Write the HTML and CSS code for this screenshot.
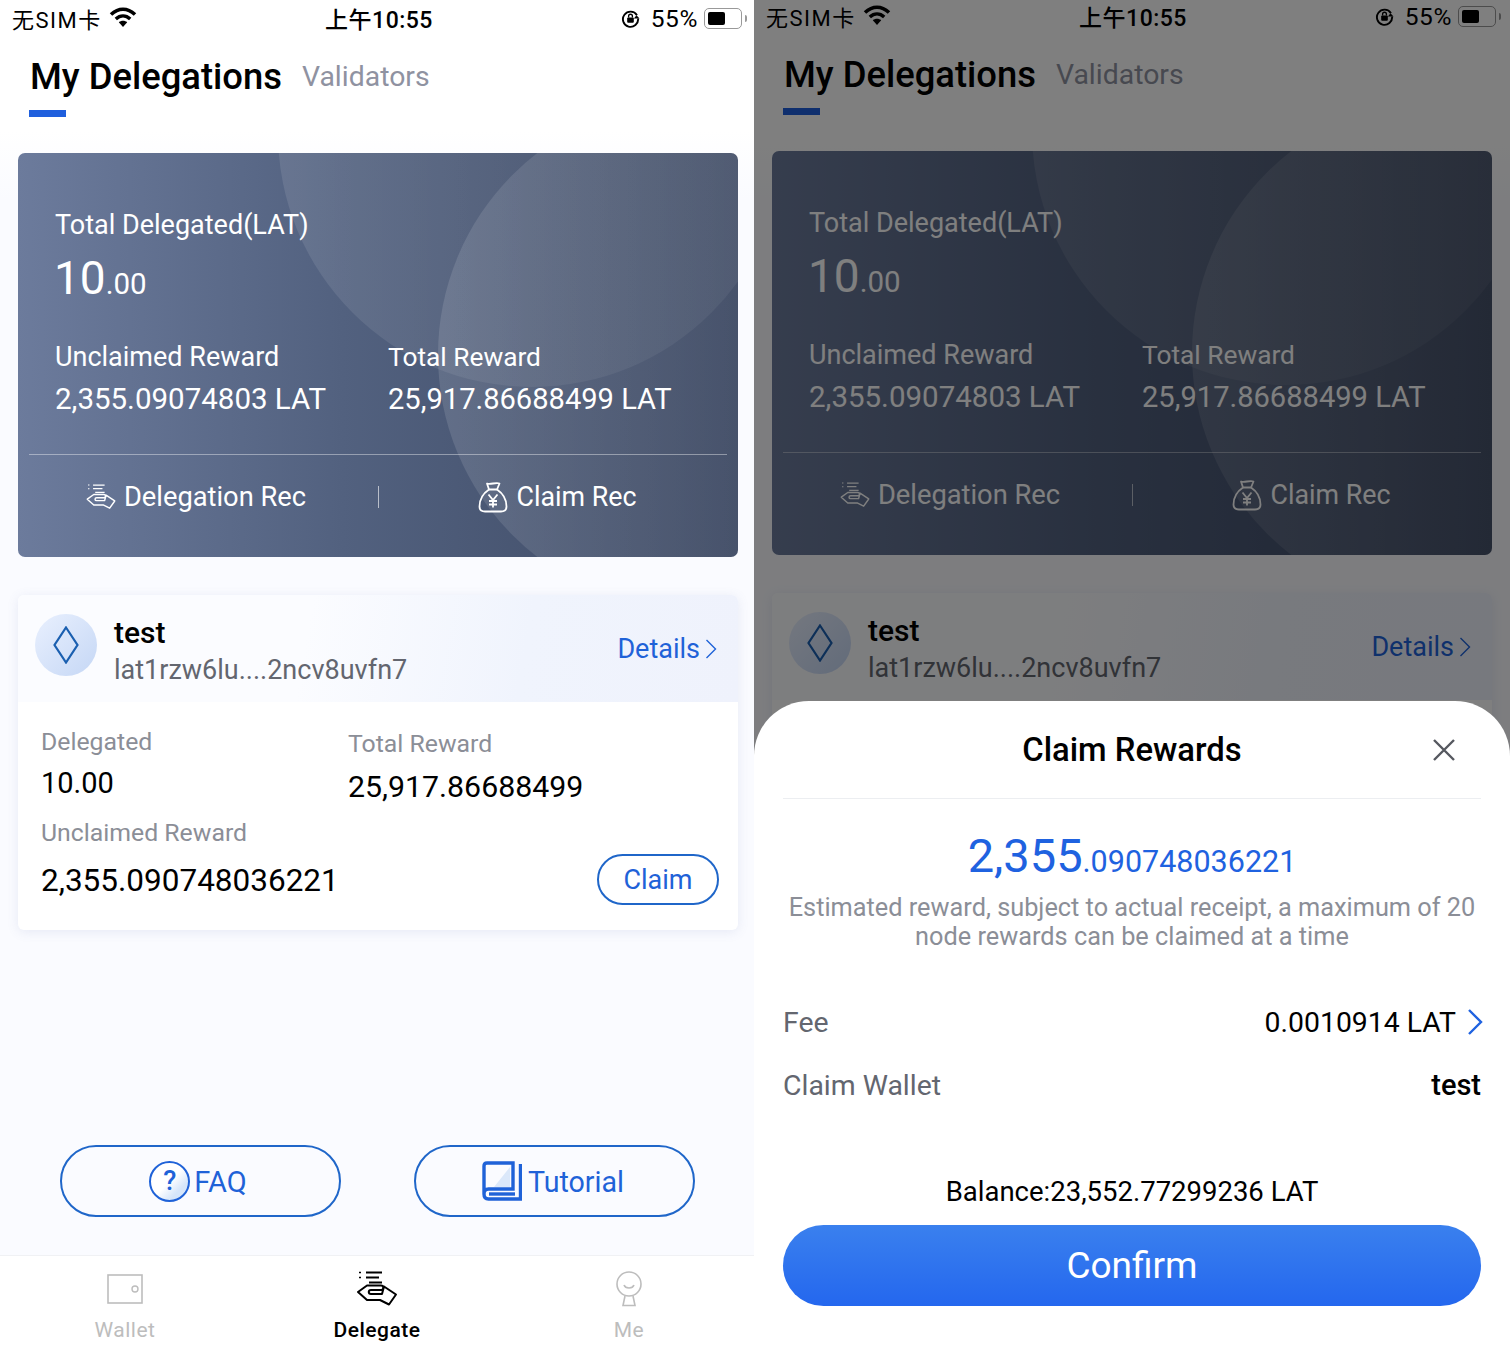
FILE: index.html
```html
<!DOCTYPE html>
<html lang="en">
<head>
<meta charset="UTF-8">
<title>My Delegations</title>
<meta name="viewport" content="width=device-width,initial-scale=1" />
<link rel="stylesheet" href="styles.css">
</head>
<body>

<svg class="defs" width="0" height="0">
  <symbol id="i-wifi" viewBox="0 0 28 20">
    <path d="M2 7.5C9.500 .5 18.500 .5 26 7.500" fill="none" stroke="currentColor" stroke-width="3.600"/>
    <path d="M6.800 12C11.200 8 16.800 8 21.200 12" fill="none" stroke="currentColor" stroke-width="3.400"/>
    <path d="M14 20L9.800 15.200C12.200 13.200 15.800 13.200 18.200 15.200Z" fill="currentColor"/>
  </symbol>
  <symbol id="i-lock" viewBox="0 0 20 20">
    <path d="M16.800 6.500A8 8 0 1 0 18 10" fill="none" stroke="currentColor" stroke-width="2"/>
    <path d="M19.500 10l-3.200-3.500-2.800 3.500z" fill="currentColor"/>
    <rect x="6.500" y="9" width="7" height="5.500" rx="1" fill="currentColor"/>
    <path d="M8 9V7.500a2 2 0 0 1 4 0V9" fill="none" stroke="currentColor" stroke-width="1.400"/>
  </symbol>
  <symbol id="i-hand" viewBox="0 0 42 36">
    <path d="M10 1.500H26M10 6.500H23M13 11.500H26" fill="none" stroke="currentColor" stroke-width="1.800"/>
    <path d="M3 1.500H5M3 6.500H5" fill="none" stroke="currentColor" stroke-width="1.400"/>
    <path d="M2 21L11 14.500H25C28 14.500 28 19 25 19H15C12 19 12 23 15 23H26L28 15.500L40 23.500L33 33.500L24 29H11Z" fill="none" stroke="currentColor" stroke-width="2" stroke-linejoin="round"/>
  </symbol>
  <symbol id="i-bag" viewBox="0 0 30 32">
    <path d="M9 2.500C12 4 18 1 21.500 2.500L19 8.500H11Z" fill="none" stroke="currentColor" stroke-width="1.800" stroke-linejoin="round"/>
    <path d="M11 8.500C5 12.500 1.500 19 1.500 25.500C1.500 29 3.500 30.500 7 30.500H23C26.500 30.500 28.500 29 28.500 25.500C28.500 19 25 12.500 19 8.500" fill="none" stroke="currentColor" stroke-width="1.800"/>
    <path d="M10.500 13.500L15 19L19.500 13.500M15 19V26.500M11 20H19M11 23.500H19" fill="none" stroke="currentColor" stroke-width="1.800"/>
  </symbol>
  <symbol id="i-book" viewBox="0 0 40 40">
    <path d="M12 26L28 6V26Z" fill="#dbe8fa"/>
    <path d="M2 33V5C2 3 3.500 2 5 2H31V28H6.500C3.500 28 2 30 2 33C2 36 3.500 38 6.500 38H38.500V3" fill="none" stroke="currentColor" stroke-width="3.400"/>
    <path d="M7 33H33" fill="none" stroke="currentColor" stroke-width="3.400"/>
  </symbol>
  <symbol id="i-wallet" viewBox="0 0 36 30">
    <rect x="1" y="1" width="34" height="28" fill="none" stroke="currentColor" stroke-width="1.600"/>
    <circle cx="28" cy="15" r="3" fill="none" stroke="currentColor" stroke-width="1.400"/>
  </symbol>
  <symbol id="i-user" viewBox="0 0 28 36">
    <circle cx="14" cy="13" r="12" fill="none" stroke="currentColor" stroke-width="1.600"/>
    <path d="M9 14C10.500 18 17.500 18 19 14" fill="none" stroke="currentColor" stroke-width="1.600"/>
    <path d="M10 25L8 34.500H20L18 25" fill="none" stroke="currentColor" stroke-width="1.600"/>
  </symbol>
</svg>

<div class="screens">

  <!-- left screen -->
  <div class="phone">
    <div class="status">
      <div class="status-left"><span>无SIM卡</span><svg class="wifi"><use href="#i-wifi"/></svg></div>
      <div class="status-time">上午10:55</div>
      <div class="status-right">
        <svg class="lock"><use href="#i-lock"/></svg><span>55%</span>
        <span class="battery"><span class="battery-fill"></span></span><span class="battery-tip"></span>
      </div>
    </div>
    <div class="tabs">
      <div class="tab-main">My Delegations<span class="tab-bar"></span></div>
      <div class="tab-other">Validators</div>
    </div>
    <div class="summary">
      <span class="blob blob-a"></span>
      <span class="blob blob-b"></span>
      <div class="summary-in">
        <div class="sum-label">Total Delegated(LAT)</div>
        <div class="sum-total">10<small>.00</small></div>
        <div class="sum-cols">
          <div>
            <div class="sum-sub">Unclaimed Reward</div>
            <div class="sum-val">2,355.09074803 LAT</div>
          </div>
          <div class="sum-col2">
            <div class="sum-sub">Total Reward</div>
            <div class="sum-val">25,917.86688499 LAT</div>
          </div>
        </div>
      </div>
      <div class="sum-links">
        <div class="sum-link"><svg class="ic-hand"><use href="#i-hand"/></svg>Delegation Rec</div>
        <div class="sum-link"><svg class="ic-bag"><use href="#i-bag"/></svg>Claim Rec</div>
      </div>
    </div>
    <div class="node">
      <div class="node-head">
        <div class="node-logo">
          <svg width="26" height="38" viewBox="0 0 26 38"><path d="M13 1.500L24.500 19L13 36.500L1.500 19Z" fill="none" stroke="#1a5fb0" stroke-width="2.200"/></svg>
        </div>
        <div class="node-name">
          <div class="node-title">test</div>
          <div class="node-addr">lat1rzw6lu....2ncv8uvfn7</div>
        </div>
        <div class="node-more">Details<svg width="12" height="20" viewBox="0 0 12 20"><path d="M1.500 1L10.500 10L1.500 19" fill="none" stroke="currentColor" stroke-width="1.400"/></svg></div>
      </div>
      <div class="node-body">
        <div class="node-cols">
          <div>
            <div class="node-label">Delegated</div>
            <div class="node-val">10.00</div>
          </div>
          <div class="node-col2">
            <div class="node-label">Total Reward</div>
            <div class="node-val node-val2">25,917.86688499</div>
          </div>
        </div>
        <div class="node-claim">
          <div>
            <div class="node-label">Unclaimed Reward</div>
            <div class="node-big">2,355.090748036221</div>
          </div>
          <div class="claim-btn">Claim</div>
        </div>
      </div>
    </div>
    <div class="actions">
      <div class="action">
        <span class="faq-ic">?</span>FAQ
      </div>
      <div class="action action-book">
        <svg class="ic-book"><use href="#i-book"/></svg>Tutorial
      </div>
    </div>
    <div class="tabbar">
      <div class="tabbar-item"><svg class="ic-wallet"><use href="#i-wallet"/></svg><span>Wallet</span></div>
      <div class="tabbar-item on"><svg class="ic-deleg"><use href="#i-hand"/></svg><span>Delegate</span></div>
      <div class="tabbar-item"><svg class="ic-user"><use href="#i-user"/></svg><span>Me</span></div>
    </div>
  </div>

  <!-- right screen, same page with the claim sheet open -->
  <div class="phone phone-right">
    <div class="status">
      <div class="status-left"><span>无SIM卡</span><svg class="wifi"><use href="#i-wifi"/></svg></div>
      <div class="status-time">上午10:55</div>
      <div class="status-right">
        <svg class="lock"><use href="#i-lock"/></svg><span>55%</span>
        <span class="battery"><span class="battery-fill"></span></span><span class="battery-tip"></span>
      </div>
    </div>
    <div class="tabs">
      <div class="tab-main">My Delegations<span class="tab-bar"></span></div>
      <div class="tab-other">Validators</div>
    </div>
    <div class="summary">
      <span class="blob blob-a"></span>
      <span class="blob blob-b"></span>
      <div class="summary-in">
        <div class="sum-label">Total Delegated(LAT)</div>
        <div class="sum-total">10<small>.00</small></div>
        <div class="sum-cols">
          <div>
            <div class="sum-sub">Unclaimed Reward</div>
            <div class="sum-val">2,355.09074803 LAT</div>
          </div>
          <div class="sum-col2">
            <div class="sum-sub">Total Reward</div>
            <div class="sum-val">25,917.86688499 LAT</div>
          </div>
        </div>
      </div>
      <div class="sum-links">
        <div class="sum-link"><svg class="ic-hand"><use href="#i-hand"/></svg>Delegation Rec</div>
        <div class="sum-link"><svg class="ic-bag"><use href="#i-bag"/></svg>Claim Rec</div>
      </div>
    </div>
    <div class="node">
      <div class="node-head">
        <div class="node-logo">
          <svg width="26" height="38" viewBox="0 0 26 38"><path d="M13 1.500L24.500 19L13 36.500L1.500 19Z" fill="none" stroke="#1a5fb0" stroke-width="2.200"/></svg>
        </div>
        <div class="node-name">
          <div class="node-title">test</div>
          <div class="node-addr">lat1rzw6lu....2ncv8uvfn7</div>
        </div>
        <div class="node-more">Details<svg width="12" height="20" viewBox="0 0 12 20"><path d="M1.500 1L10.500 10L1.500 19" fill="none" stroke="currentColor" stroke-width="1.400"/></svg></div>
      </div>
    </div>

    <div class="dim"></div>

    <div class="sheet">
      <div class="sheet-head">
        <div class="sheet-title">Claim Rewards</div>
        <svg class="sheet-close" width="24" height="24" viewBox="0 0 24 24"><path d="M2 2L22 22M22 2L2 22" fill="none" stroke="#55585f" stroke-width="2.400"/></svg>
      </div>
      <div class="sheet-amount">2,355<small>.090748036221</small></div>
      <div class="sheet-hint">Estimated reward, subject to actual receipt, a maximum of 20<br>node rewards can be claimed at a time</div>
      <div class="sheet-row sheet-fee">
        <span class="sheet-key">Fee</span>
        <span class="sheet-v">0.0010914 LAT<svg width="16" height="28" viewBox="0 0 16 28"><path d="M2 2L14 14L2 26" fill="none" stroke="#1f62e0" stroke-width="2.400"/></svg></span>
      </div>
      <div class="sheet-row sheet-wallet">
        <span class="sheet-key">Claim Wallet</span>
        <span class="sheet-v sheet-strong">test</span>
      </div>
      <div class="sheet-balance">Balance:23,552.77299236 LAT</div>
      <div class="sheet-confirm">Confirm</div>
    </div>
  </div>

</div>
</body>
</html>
```

FILE: styles.css
```css
* {
  box-sizing: border-box;
}
body {
  margin: 0;
  background: #fff;
  font-family: Roboto, "Noto Sans CJK SC", sans-serif;
  color: #000;
}
.defs {
  position: absolute;
}
.screens {
  display: flex;
  width: 1510px;
  height: 1356px;
  overflow: hidden;
}

.phone {
  position: relative;
  flex: none;
  width: 756px;
  height: 1356px;
  overflow: hidden;
  background: linear-gradient(#fff 0, #fff 130px, #fafbff 200px);
}
.phone-right {
  margin-left: -2px;
}
.phone-right .status {
  margin-top: -2px;
}

/* status bar */
.status {
  display: grid;
  grid-template-columns: 1fr auto 1fr;
  align-items: center;
  height: 36px;
  padding: 0 9px 0 12px;
  font-size: 22px;
}
.status-left {
  display: flex;
  align-items: center;
  gap: 7px;
  letter-spacing: 1.500px;
}
.wifi {
  width: 28px;
  height: 20px;
  margin-top: -2px;
}
.status-time {
  margin-left: -1px;
  font-size: 23px;
  font-weight: 500;
  letter-spacing: .5px;
}
.status-right {
  display: flex;
  align-items: center;
  justify-content: flex-end;
  font-size: 24.500px;
  letter-spacing: .6px;
}
.lock {
  width: 19px;
  height: 19px;
  margin-right: 11px;
}
.battery {
  width: 38px;
  height: 21px;
  margin-left: 6px;
  padding: 3px;
  border: 1.500px solid #999;
  border-radius: 5px;
}
.battery-fill {
  display: block;
  width: 17px;
  height: 100%;
  background: #000;
  border-radius: 2px;
}
.battery-tip {
  width: 2px;
  height: 7px;
  margin-left: 3px;
  background: #999;
  border-radius: 0 2px 2px 0;
}

/* tabs */
.tabs {
  display: flex;
  gap: 20px;
  padding: 21px 0 0 30px;
}
.tab-main {
  font-size: 36.400px;
  font-weight: 500;
  line-height: 40px;
}
.tab-bar {
  display: block;
  width: 37px;
  height: 7px;
  margin: 13px 0 0 -1px;
  background: #1f5fdd;
}
.tab-other {
  font-size: 28.400px;
  line-height: 40px;
  color: #8f92a1;
}

/* summary card */
.summary {
  position: relative;
  height: 404px;
  margin: 36px 18px 0;
  overflow: hidden;
  border-radius: 7px;
  color: #fff;
  background: linear-gradient(90deg, #6c7b9c 0, #52617f 45%, #3d4963 100%);
}
.blob {
  position: absolute;
  border-radius: 50%;
}
.blob-a {
  left: 260px;
  top: -274px;
  width: 508px;
  height: 508px;
  background: linear-gradient(90deg, rgba(255,255,255,.1) 0, rgba(255,255,255,.06) 50%, rgba(255,255,255,.05) 100%);
}
.blob-b {
  left: 420px;
  top: -53px;
  width: 510px;
  height: 510px;
  background: linear-gradient(90deg, rgba(255,255,255,.12) 0, rgba(255,255,255,.05) 60%);
}
.summary-in {
  position: relative;
  height: 302px;
  margin: 0 11px;
  padding: 55px 37px 0 26px;
  border-bottom: 1px solid rgba(255,255,255,.4);
}
.sum-label {
  font-size: 27px;
  line-height: 34px;
}
.sum-total {
  margin-top: 11px;
  font-size: 46px;
  line-height: 50px;
  margin-left: -1px;
}
.sum-total small {
  font-size: 29.500px;
}
.sum-cols {
  display: grid;
  grid-template-columns: 333px 1fr;
  margin-top: 32px;
}
.sum-sub {
  font-size: 27px;
  line-height: 32px;
}
.sum-val {
  margin-top: 8px;
  font-size: 29.500px;
  line-height: 36px;
}
.sum-col2 .sum-sub {
  font-size: 26.300px;
}
.sum-col2 .sum-val {
  font-size: 29.100px;
}
.sum-links {
  position: relative;
  display: grid;
  grid-template-columns: 1fr 1fr;
  padding-top: 31px;
}
.sum-link {
  display: flex;
  align-items: center;
  justify-content: center;
  height: 22px;
  font-size: 27.300px;
  padding-right: 3px;
}
.sum-link + .sum-link {
  font-size: 26.800px;
  border-left: 1px solid rgba(255,255,255,.6);
}
.ic-hand {
  width: 32px;
  height: 26px;
  margin: 0 7px 0 -2px;
}
.ic-bag {
  width: 30px;
  height: 32px;
  margin-right: 9px;
}

/* node card */
.node {
  height: 335px;
  margin: 38px 18px 0;
  background: #fff;
  border-radius: 6px;
  box-shadow: 0 2px 12px rgba(90,110,170,.12);
}
.node-head {
  display: flex;
  align-items: center;
  height: 107px;
  padding: 0 21px 0 17px;
  border-radius: 6px 6px 0 0;
  background: linear-gradient(100deg, #fbfcff 40%, #f0f4fd 70%, #eff2fc 100%);
}
.node-logo {
  display: flex;
  align-items: center;
  justify-content: center;
  width: 62px;
  height: 62px;
  margin-top: -8px;
  border-radius: 50%;
  background: linear-gradient(135deg, #e9f0fe, #c5d7f5);
}
.node-name {
  margin-left: 17px;
  margin-top: 5px;
}
.node-title {
  font-size: 30px;
  font-weight: 500;
  line-height: 34px;
}
.node-addr {
  margin-top: 3px;
  font-size: 27px;
  line-height: 34px;
  color: #63666f;
}
.node-more {
  display: flex;
  align-items: center;
  gap: 5px;
  margin-left: auto;
  font-size: 27px;
  color: #1f62d8;
}
.node-body {
  height: 228px;
  padding: 25px 19px 0 23px;
}
.node-cols {
  display: grid;
  grid-template-columns: 307px 1fr;
}
.node-col2 {
  padding-top: 2px;
}
.node-label {
  font-size: 24.800px;
  line-height: 30px;
  color: #8b8e97;
}
.node-val {
  margin-top: 8px;
  font-size: 29px;
  line-height: 36px;
}
.node-val2 {
  margin-top: 10px;
  font-size: 30.300px;
}
.node-claim {
  display: flex;
  justify-content: space-between;
  margin-top: 13px;
}
.node-big {
  margin-top: 14px;
  font-size: 31.500px;
  line-height: 38px;
}
.claim-btn {
  display: flex;
  align-items: center;
  justify-content: center;
  align-self: flex-end;
  width: 122px;
  height: 51px;
  margin-bottom: -5px;
  border: 2px solid #1f66c9;
  border-radius: 26px;
  font-size: 27px;
  color: #1f62d8;
}

/* bottom buttons */
.actions {
  display: flex;
  gap: 73px;
  margin-top: 215px;
  padding-left: 60px;
}
.action {
  display: flex;
  align-items: center;
  justify-content: center;
  width: 281px;
  height: 72px;
  padding: 2px 4px 0 0;
  border: 2px solid #1f66c9;
  border-radius: 36px;
  font-size: 29px;
  color: #1f62d8;
}
.action-book {
  font-size: 28.600px;
}
.faq-ic {
  display: flex;
  align-items: center;
  justify-content: center;
  width: 41px;
  height: 41px;
  margin: -2px 4px 0 -1px;
  border: 2px solid #1f62d8;
  border-radius: 50%;
  font-size: 27px;
  font-weight: 500;
  background: linear-gradient(135deg, #fff 50%, #d6e6fa 75%);
}
.ic-book {
  width: 40px;
  height: 40px;
  margin: -2px 6px 0 1px;
}

/* tab bar */
.tabbar {
  display: grid;
  grid-template-columns: repeat(3, 252px);
  height: 101px;
  margin-top: 38px;
  padding-top: 15px;
  background: #fff;
  border-top: 1px solid #f0f1f4;
}
.tabbar-item {
  display: flex;
  flex-direction: column;
  align-items: center;
  color: #bdbdbd;
  font-size: 21px;
  margin-left: -2px;
}
.tabbar-item svg {
  height: 36px;
}
.tabbar-item span {
  margin-top: 9px;
  line-height: 28px;
  letter-spacing: .5px;
}
.tabbar-item.on {
  color: #000;
  font-weight: 500;
}
.ic-wallet {
  width: 36px;
}
.ic-deleg {
  width: 42px;
}
.ic-user {
  width: 28px;
}

/* sheet on right */
.dim {
  position: absolute;
  inset: 0;
  background: rgba(0,0,0,.5);
}
.sheet {
  position: absolute;
  left: 0;
  right: 0;
  top: 701px;
  bottom: 0;
  padding: 0 29px;
  background: #fff;
  border-radius: 55px 55px 0 0;
}
.sheet-head {
  position: relative;
  height: 98px;
  padding-top: 29px;
  border-bottom: 1px solid #eceef1;
  text-align: center;
}
.sheet-title {
  font-size: 32.800px;
  font-weight: 500;
  line-height: 40px;
}
.sheet-close {
  position: absolute;
  right: 25px;
  top: 37px;
}
.sheet-amount {
  margin-top: 27px;
  font-size: 47px;
  line-height: 60px;
  text-align: center;
  color: #1f62e0;
}
.sheet-amount small {
  font-size: 30.500px;
}
.sheet-hint {
  margin-top: 1px;
  font-size: 25.300px;
  line-height: 29px;
  text-align: center;
  color: #8b8e97;
}
.sheet-row {
  display: flex;
  justify-content: space-between;
  align-items: center;
  height: 40px;
  font-size: 28.400px;
}
.sheet-fee {
  margin-top: 51px;
}
.sheet-wallet {
  margin-top: 23px;
}
.sheet-key {
  color: #63666f;
}
.sheet-v {
  display: flex;
  align-items: center;
  gap: 11px;
}
.sheet-v svg {
  margin-right: -2px;
}
.sheet-strong {
  font-size: 29px;
  font-weight: 500;
}
.sheet-balance {
  margin-top: 69px;
  font-size: 27.500px;
  line-height: 36px;
  text-align: center;
}
.sheet-confirm {
  display: flex;
  align-items: center;
  justify-content: center;
  height: 81px;
  margin-top: 15px;
  border-radius: 41px;
  font-size: 37px;
  color: #fff;
  background: linear-gradient(#3a80ee, #2467ee);
}
```
